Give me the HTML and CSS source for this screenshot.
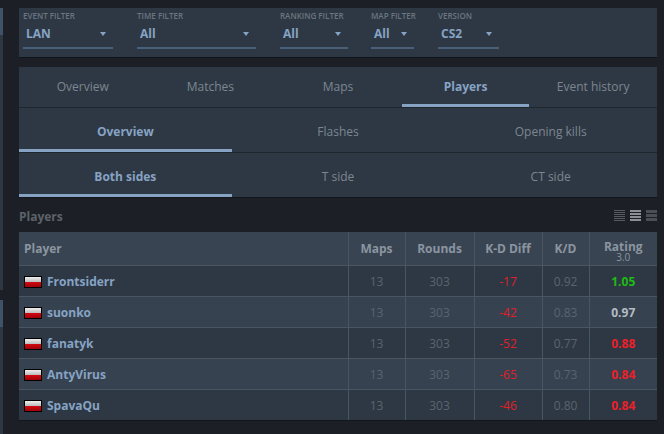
FILE: index.html
```html
<!DOCTYPE HTML><html><head><title>Players</title><meta name="viewport" content="width=device-width, initial-scale=1">
<link rel="stylesheet" href="styles.css">
</head><body>
<div class="edge"><div class="e1"></div><div class="e2"></div><div class="e1 e3"></div><div class="e4"></div></div>
<div class="main">
<div class="filters">
<div class="f f1"><label>EVENT FILTER</label><div class="sel"><span>LAN</span><i></i></div></div>
<div class="f f2"><label>TIME FILTER</label><div class="sel"><span>All</span><i></i></div></div>
<div class="f f3"><label>RANKING FILTER</label><div class="sel"><span>All</span><i></i></div></div>
<div class="f f4"><label>MAP FILTER</label><div class="sel"><span>All</span><i></i></div></div>
<div class="f f5"><label>VERSION</label><div class="sel"><span>CS2</span><i></i></div></div>
</div>
<div class="tabs">
<div class="row r1"><a>Overview</a><a>Matches</a><a>Maps</a><a class="on">Players</a><a>Event history</a></div>
<div class="row r2"><a class="on">Overview</a><a>Flashes</a><a>Opening kills</a></div>
<div class="row r3"><a class="on">Both sides</a><a>T side</a><a>CT side</a></div>
</div>
<div class="head"><h3>Players</h3><div class="dens">
<div class="d d1"><b></b><b></b><b></b><b></b><b></b><b></b></div>
<div class="d d2"><b></b><b></b><b></b><b></b></div>
<div class="d d3"><b></b><b></b><b></b></div>
</div></div>
<table>
<tr><th class="p">Player</th><th class="c1">Maps</th><th class="c2">Rounds</th><th class="c3">K-D Diff</th><th class="c4">K/D</th><th class="c5">Rating<small>3.0</small></th></tr>
<tr><td class="p"><i class="pl"></i>Frontsiderr</td><td>13</td><td>303</td><td class="neg">-17</td><td>0.92</td><td class="rt g">1.05</td></tr>
<tr><td class="p"><i class="pl"></i>suonko</td><td>13</td><td>303</td><td class="neg">-42</td><td>0.83</td><td class="rt w">0.97</td></tr>
<tr><td class="p"><i class="pl"></i>fanatyk</td><td>13</td><td>303</td><td class="neg">-52</td><td>0.77</td><td class="rt r">0.88</td></tr>
<tr><td class="p"><i class="pl"></i>AntyVirus</td><td>13</td><td>303</td><td class="neg">-65</td><td>0.73</td><td class="rt r">0.84</td></tr>
<tr><td class="p"><i class="pl"></i>SpavaQu</td><td>13</td><td>303</td><td class="neg">-46</td><td>0.80</td><td class="rt r">0.84</td></tr>
</table>
</div>
</body></html>
```
FILE: styles.css
```css
html{font-family:"Open Sans",Arial,sans-serif}
body{margin:0;padding:0;background-color:#1c2026;display:flex;height:434px;overflow:hidden}
.edge{width:3px;flex:none;padding-top:8px}
.e1{height:27px;background-color:#3f5268}
.e2{height:255px;background-color:#2d3844}
.e3{margin-top:10px}
.e4{height:107px;background-color:#2d3844}
.main{margin-left:16px;width:638px;padding-top:8px}
.filters{display:flex;height:49px;background-color:#2d3844;box-shadow:0 1px 0 #12151a;box-sizing:border-box;padding:2px 4px 0}
.f label{display:block;font-size:8px;font-weight:600;color:#6b7580;line-height:12px;height:12px;white-space:nowrap}
.sel{display:flex;justify-content:space-between;align-items:center;height:27px;border-bottom:2px solid #4a6078;padding:0 7px 2px 3px;box-sizing:border-box;font-size:12px;font-weight:700;color:#87a3c4}
.sel i{width:0;height:0;border-left:3.5px solid transparent;border-right:3.5px solid transparent;border-top:4px solid #87a3c4}
.f1{width:90px;margin-right:24px}
.f2{width:119px;margin-right:24px}
.f3{width:68px;margin-right:23px}
.f4{width:43px;margin-right:24px}
.f5{width:61px}
.tabs{margin-top:10px;background-color:#2d3844;box-shadow:0 1px 0 #12151a}
.row{display:flex;box-sizing:border-box;border-bottom:1px solid #1f262e}
.r1{height:41px}
.r2{height:45px}
.r3{height:44px;border-bottom:0}
.row a{flex:1;text-align:center;font-size:12px;color:#7d8690;line-height:39px;box-sizing:border-box;height:100%}
.row.r2 a,.row.r3 a{line-height:48px}
.row a.on{color:#87a3c4;font-weight:700;border-bottom:3px solid #87a3c4}
.head{display:flex;justify-content:space-between;align-items:center;height:35px;padding-top:4px;box-sizing:border-box}
h3{margin:0;font-size:12px;font-weight:700;color:#5c6269}
.dens{display:flex;gap:5px;margin-top:-2px}
.d{width:11px;height:11px;display:flex;flex-direction:column;justify-content:space-between}
.d b{display:block;flex:none}
.d1 b{height:1px;background-color:#555b62}
.d2 b{height:2px;background-color:#8a9096}
.d3 b{height:3px;background-color:#4a4f55}
table{width:638px;border-collapse:collapse;table-layout:fixed;box-shadow:0 1px 0 #12151a}
tr{background-color:#2d3844;height:31px}
tr:first-child{background-color:#384452;height:33px}
tr:nth-child(3),tr:nth-child(5){background-color:#364250}
th,td{border:1px solid #495662;padding:1px 0 0;text-align:center;font-size:12px;color:#5a646e}
tr:first-child th{border-top:0}
tr:last-child td{border-bottom:0}
th:first-child,td:first-child{border-left:0}
th:last-child,td:last-child{border-right:0}
th{font-weight:700;color:#8b95a0;line-height:13px}
th.c5{padding-top:6px;line-height:11px}
th small{display:block;font-size:10px;font-weight:400;line-height:10px}
.p{text-align:left;padding-left:5px;border-right:0;width:323.5px}
.c1{width:56px}.c2{width:68px}.c3{width:67px}.c4{width:46px}
td.p{font-weight:700;color:#87a3c4}
.pl{display:inline-block;width:16px;height:10px;border:1px solid #000;margin-right:5px;vertical-align:-2px;background:linear-gradient(#eee,#bbb 50%,#d40a12 50%,#a00008)}
.neg{color:#e02028}
.rt{font-weight:700}
.g{color:#1dbb13}
.w{color:#b5bcc3}
.r{color:#ec2029}
```
